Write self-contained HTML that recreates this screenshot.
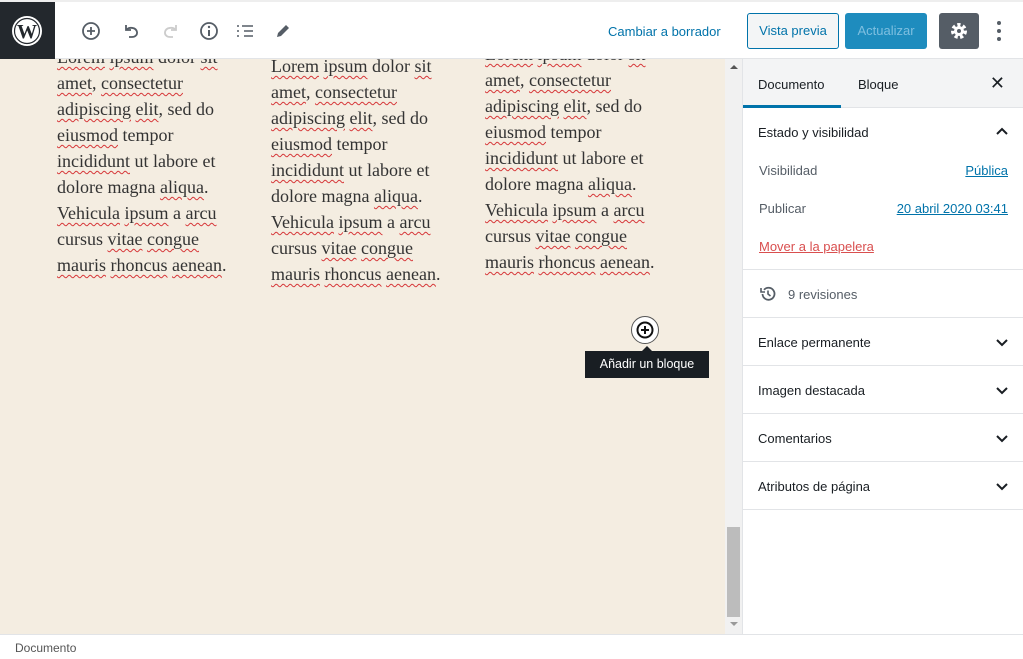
<!DOCTYPE html>
<html><head><meta charset="utf-8"><style>
*{margin:0;padding:0;box-sizing:border-box}
body{width:1023px;height:659px;overflow:hidden;background:#fff;font-family:"Liberation Sans",sans-serif;position:relative}
.hdr{position:absolute;top:0;left:0;width:1023px;height:59px;background:#fff;border-bottom:1px solid #e2e4e7;border-top:2px solid #eee;z-index:3}
.wp{position:absolute;left:0;top:0;width:55px;height:57px;background:#23282d}
.ic{position:absolute;top:18px}
.content{position:absolute;top:59px;left:0;width:725px;height:575px;background:#f4ede1;overflow:hidden}
.col{position:absolute;font-family:"Liberation Serif",serif;font-size:18px;line-height:26px;color:#333;width:210px}
.col u{text-decoration:underline wavy #d63638;text-decoration-thickness:1px;text-underline-offset:3px}
.sb{position:absolute;left:725px;top:59px;width:17px;height:575px;background:#f1f1f1}
.side{position:absolute;left:742px;top:59px;width:281px;height:575px;border-left:1px solid #e2e4e7;background:#fff}
.tabs{height:49px;background:#f3f4f5;border-bottom:1px solid #e2e4e7;position:relative;font-size:13px;color:#191e23}
.panel{border-bottom:1px solid #e2e4e7;position:relative;height:48px;font-size:13px;color:#191e23}
.panel span{position:absolute;left:15px;top:17px}
.chev{position:absolute;right:14px;top:20px}
.footer{position:absolute;top:634px;left:0;width:1023px;height:25px;border-top:1px solid #e2e4e7;background:#fff;font-size:12px;color:#555}
</style></head><body>
<div class="hdr">
 <div class="wp"><svg width="55" height="57" viewBox="0 0 55 57"><circle cx="27" cy="29" r="15" fill="#fff"/><circle cx="27" cy="29" r="12.5" fill="none" stroke="#23282d" stroke-width="1.2"/><text x="27" y="36" font-family="Liberation Serif" font-weight="bold" font-size="20" text-anchor="middle" fill="#23282d">W</text></svg></div>
 <svg class="ic" style="left:80px" width="22" height="22" viewBox="0 0 22 22"><circle cx="11" cy="11" r="8" fill="none" stroke="#555d66" stroke-width="1.8"/><path d="M11 7v8M7 11h8" stroke="#555d66" stroke-width="1.8"/></svg>
 <svg class="ic" style="left:120px" width="22" height="22" viewBox="0 0 22 22"><path d="M6 5v5h5" fill="none" stroke="#555d66" stroke-width="1.8"/><path d="M6.5 9.5C9 7 16 7 17 12c.5 3-2 5-5 5H9" fill="none" stroke="#555d66" stroke-width="1.8"/></svg>
 <svg class="ic" style="left:160px" width="22" height="22" viewBox="0 0 22 22"><path d="M16 5v5h-5" fill="none" stroke="#ccc" stroke-width="1.8"/><path d="M15.5 9.5C13 7 6 7 5 12c-.5 3 2 5 5 5h3" fill="none" stroke="#ccc" stroke-width="1.8"/></svg>
 <svg class="ic" style="left:198px" width="22" height="22" viewBox="0 0 22 22"><circle cx="11" cy="11" r="8" fill="none" stroke="#555d66" stroke-width="1.8"/><path d="M11 10v6" stroke="#555d66" stroke-width="2"/><circle cx="11" cy="7" r="1.2" fill="#555d66"/></svg>
 <svg class="ic" style="left:234px" width="22" height="22" viewBox="0 0 22 22"><path d="M3 6h2M3 11h2M3 16h2M8 6h11M10 11h9M10 16h9" stroke="#555d66" stroke-width="1.6"/></svg>
 <svg class="ic" style="left:272px" width="22" height="22" viewBox="0 0 22 22"><path d="M5 17l1-4 8-8 3 3-8 8z" fill="#555d66"/></svg>
 <div style="position:absolute;left:608px;top:22px;font-size:13px;color:#0073aa">Cambiar a borrador</div>
 <div style="position:absolute;left:747px;top:11px;width:92px;height:36px;border:1px solid #0073aa;border-radius:3px;background:#f3f5f6;color:#0073aa;font-size:13px;text-align:center;line-height:34px">Vista previa</div>
 <div style="position:absolute;left:845px;top:11px;width:82px;height:36px;border-radius:3px;background:#1e8cbe;color:#7ebfe0;font-size:13px;text-align:center;line-height:36px">Actualizar</div>
 <div style="position:absolute;left:939px;top:11px;width:40px;height:36px;border-radius:3px;background:#555d66"><svg width="40" height="36" viewBox="0 0 40 36"><circle cx="20" cy="18" r="6" fill="none" stroke="#fff" stroke-width="4" stroke-dasharray="3 2.3"/><circle cx="20" cy="18" r="5" fill="#fff"/><circle cx="20" cy="18" r="2" fill="#555d66"/></svg></div>
 <svg style="position:absolute;left:990px;top:18px" width="18" height="22" viewBox="0 0 18 22"><circle cx="9" cy="3" r="2" fill="#555d66"/><circle cx="9" cy="11" r="2" fill="#555d66"/><circle cx="9" cy="19" r="2" fill="#555d66"/></svg>
</div>
<div class="content">
 <div class="col" style="left:57px;top:-15px"><u>Lorem</u> <u>ipsum</u> dolor <u>sit</u><br><u>amet</u>, <u>consectetur</u><br><u>adipiscing</u> <u>elit</u>, sed do<br><u>eiusmod</u> tempor<br><u>incididunt</u> ut labore et<br>dolore magna <u>aliqua</u>.<br><u>Vehicula</u> <u>ipsum</u> a <u>arcu</u><br>cursus <u>vitae</u> <u>congue</u><br><u>mauris</u> <u>rhoncus</u> <u>aenean</u>.</div>
 <div class="col" style="left:271px;top:-6px"><u>Lorem</u> <u>ipsum</u> dolor <u>sit</u><br><u>amet</u>, <u>consectetur</u><br><u>adipiscing</u> <u>elit</u>, sed do<br><u>eiusmod</u> tempor<br><u>incididunt</u> ut labore et<br>dolore magna <u>aliqua</u>.<br><u>Vehicula</u> <u>ipsum</u> a <u>arcu</u><br>cursus <u>vitae</u> <u>congue</u><br><u>mauris</u> <u>rhoncus</u> <u>aenean</u>.</div>
 <div class="col" style="left:485px;top:-18px"><u>Lorem</u> <u>ipsum</u> dolor <u>sit</u><br><u>amet</u>, <u>consectetur</u><br><u>adipiscing</u> <u>elit</u>, sed do<br><u>eiusmod</u> tempor<br><u>incididunt</u> ut labore et<br>dolore magna <u>aliqua</u>.<br><u>Vehicula</u> <u>ipsum</u> a <u>arcu</u><br>cursus <u>vitae</u> <u>congue</u><br><u>mauris</u> <u>rhoncus</u> <u>aenean</u>.</div>
 <div style="position:absolute;left:631px;top:257px;width:28px;height:28px;border-radius:50%;background:#fff;border:1px solid #555"><svg width="26" height="26" viewBox="0 0 26 26"><circle cx="13" cy="13" r="7.5" fill="none" stroke="#111" stroke-width="2"/><path d="M13 9v8M9 13h8" stroke="#111" stroke-width="2"/></svg></div>
 <div style="position:absolute;left:641px;top:287px;width:0;height:0;border-left:6px solid transparent;border-right:6px solid transparent;border-bottom:6px solid #191e23"></div>
 <div style="position:absolute;left:585px;top:292px;width:124px;height:27px;background:#191e23;color:#fff;font-size:12.5px;line-height:27px;text-align:center">Añadir un bloque</div>
</div>
<div class="sb"><div style="position:absolute;left:5px;top:6px;border-left:4px solid transparent;border-right:4px solid transparent;border-bottom:4px solid #555"></div><div style="position:absolute;left:2px;top:468px;width:13px;height:90px;background:#bcbcbc"></div><div style="position:absolute;left:5px;top:563px;border-left:4px solid transparent;border-right:4px solid transparent;border-top:4px solid #999"></div></div>
<div class="side">
 <div class="tabs"><span style="position:absolute;left:15px;top:18px">Documento</span><div style="position:absolute;left:0;bottom:-1px;width:98px;height:3px;background:#0073aa"></div><span style="position:absolute;left:115px;top:18px">Bloque</span><span style="position:absolute;right:18px;top:14px;font-size:18px">✕</span></div>
 <div style="height:162px;border-bottom:1px solid #e2e4e7;position:relative;font-size:13px">
  <span style="position:absolute;left:15px;top:17px;color:#191e23">Estado y visibilidad</span>
  <svg class="chev" style="top:18px" width="14" height="10" viewBox="0 0 14 10"><path d="M2 8l5-5 5 5" fill="none" stroke="#191e23" stroke-width="2"/></svg>
  <span style="position:absolute;left:16px;top:55px;color:#555d66">Visibilidad</span>
  <span style="position:absolute;right:15px;top:55px;color:#0073aa;text-decoration:underline">Pública</span>
  <span style="position:absolute;left:16px;top:93px;color:#555d66">Publicar</span>
  <span style="position:absolute;right:15px;top:93px;color:#0073aa;text-decoration:underline">20 abril 2020 03:41</span>
  <span style="position:absolute;left:16px;top:131px;color:#d94f4f;text-decoration:underline">Mover a la papelera</span>
 </div>
 <div class="panel" style="height:48px"><svg style="position:absolute;left:16px;top:15px" width="18" height="18" viewBox="0 0 18 18"><path d="M3.5 9A6 6 0 1 0 5 4.8" fill="none" stroke="#555d66" stroke-width="1.8"/><path d="M2 3v4h4" fill="none" stroke="#555d66" stroke-width="1.6"/><path d="M9 5.5V9l2.5 2" fill="none" stroke="#555d66" stroke-width="1.6"/></svg><span style="left:45px;color:#555d66">9 revisiones</span></div>
 <div class="panel"><span>Enlace permanente</span><svg class="chev" width="14" height="10" viewBox="0 0 14 10"><path d="M2 2l5 5 5-5" fill="none" stroke="#191e23" stroke-width="2"/></svg></div>
 <div class="panel"><span>Imagen destacada</span><svg class="chev" width="14" height="10" viewBox="0 0 14 10"><path d="M2 2l5 5 5-5" fill="none" stroke="#191e23" stroke-width="2"/></svg></div>
 <div class="panel"><span>Comentarios</span><svg class="chev" width="14" height="10" viewBox="0 0 14 10"><path d="M2 2l5 5 5-5" fill="none" stroke="#191e23" stroke-width="2"/></svg></div>
 <div class="panel"><span>Atributos de página</span><svg class="chev" width="14" height="10" viewBox="0 0 14 10"><path d="M2 2l5 5 5-5" fill="none" stroke="#191e23" stroke-width="2"/></svg></div>
</div>
<div class="footer"><span style="position:absolute;left:15px;top:6px">Documento</span></div>
</body></html>
